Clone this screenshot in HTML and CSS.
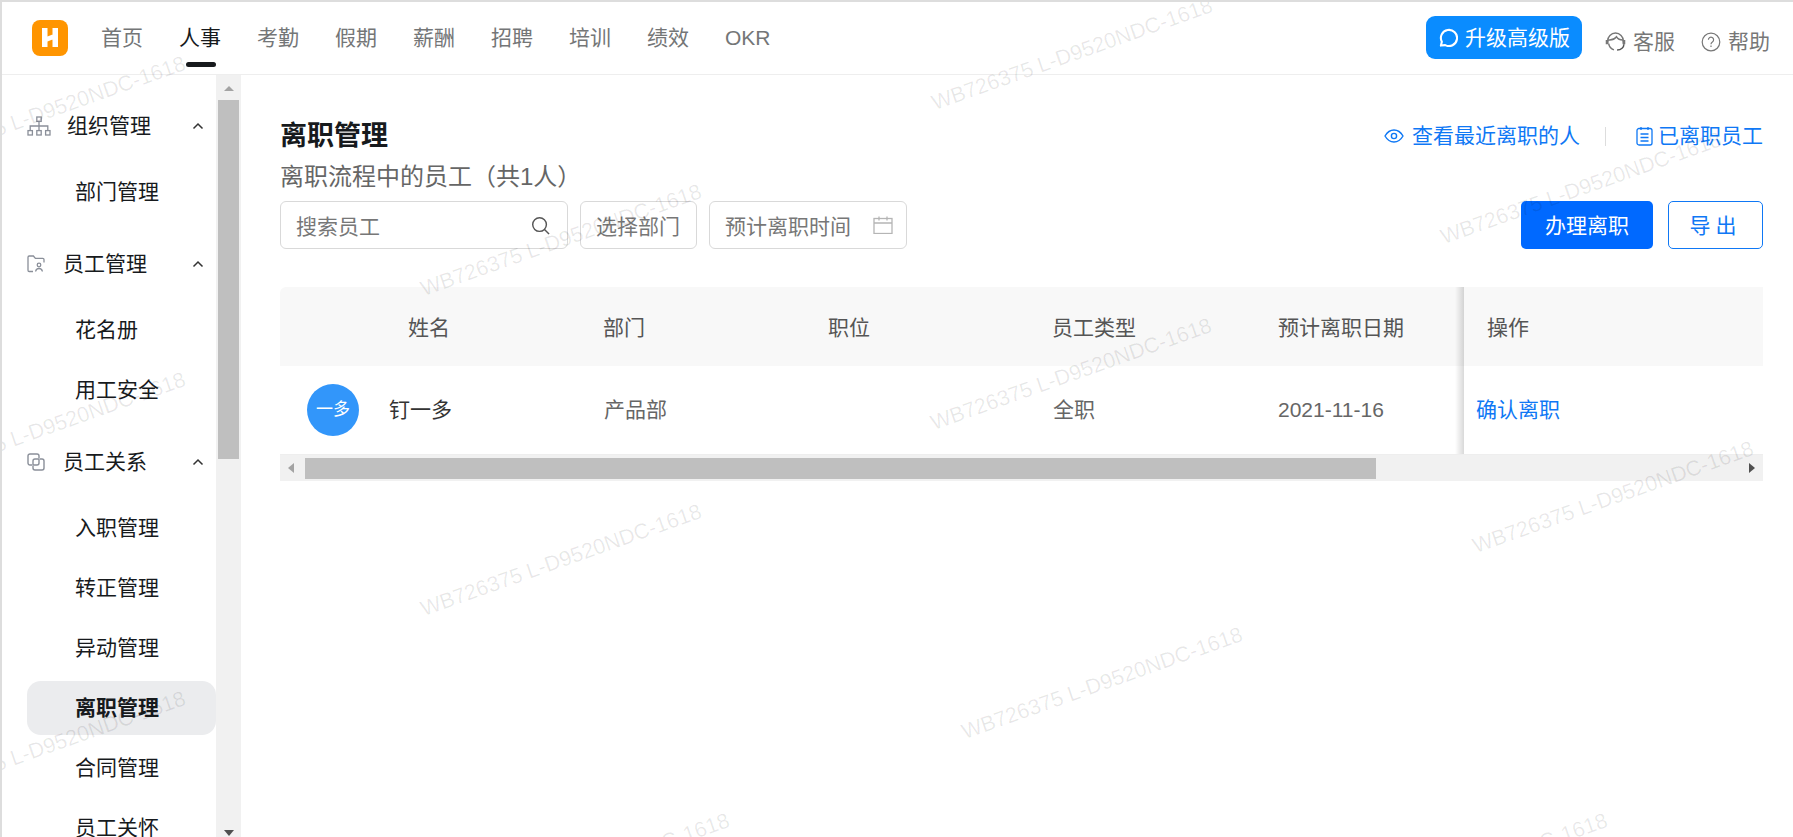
FILE: index.html

```html
<!DOCTYPE html>
<html lang="zh-CN">
<head>
  <meta charset="UTF-8">
  <title>离职管理</title>
  <link rel="stylesheet" href="styles.css">
</head>
<body>
<div class="app">
  <header class="topbar">
    <svg class="logo" viewBox="0 0 36 36">
      <rect width="36" height="36" rx="8" fill="#ff9500"/>
      <path d="M10 8h5.500v19H10z M20.500 8h5.500v19h-5.500z M15.500 16.500l5-2v5l-5 2z" fill="#fff"/>
    </svg>
    <nav class="nav">
      <a class="nav-item">首页</a>
      <a class="nav-item active">人事</a>
      <a class="nav-item">考勤</a>
      <a class="nav-item">假期</a>
      <a class="nav-item">薪酬</a>
      <a class="nav-item">招聘</a>
      <a class="nav-item">培训</a>
      <a class="nav-item">绩效</a>
      <a class="nav-item">OKR</a>
    </nav>
    <button class="upgrade">
      <svg viewBox="0 0 20 20" fill="none" stroke="#fff" stroke-width="2.200">
        <path d="M2 18.500l1-4A8.500 8.500 0 1 1 6.500 18z" stroke-linejoin="round"/>
      </svg>
      升级高级版
    </button>
    <a class="top-link service">
      <svg viewBox="0 0 20 20" fill="none" stroke="#777" stroke-width="1.400">
        <path d="M2.500 11V9.500a7.500 7.500 0 0 1 15 0V11"/>
        <path d="M3 8.500c3.500.5 6-.5 8-3 1.200 2 3 3 6 3"/>
        <path d="M3.500 12c.5 3 2.500 5 5 6"/>
        <path d="M2 8.500v4M18 8.500v4" stroke-width="2.600"/>
        <path d="M18 12.500c0 3-2.500 5.500-6.500 5.500" stroke="#555"/>
      </svg>
      客服
    </a>
    <a class="top-link help">
      <svg viewBox="0 0 20 20" fill="none" stroke="#777" stroke-width="1.200">
        <circle cx="10" cy="10" r="8.800"/>
        <path d="M7.400 7.800a2.600 2.600 0 1 1 4 2.200c-.9.600-1.400 1-1.400 2.200"/>
        <path d="M10 13.600v1.400"/>
      </svg>
      帮助
    </a>
  </header>

  <div class="content">
    <aside class="sidebar">
      <div class="menu">
        <div class="menu-group">
          <div class="group-title">
            <svg class="group-icon org" viewBox="0 0 24 20" fill="none" stroke="#8a8f99" stroke-width="1.300">
              <rect x="9.800" y="1" width="4.400" height="4.400"/>
              <rect x="1" y="14.600" width="4.400" height="4.400"/>
              <rect x="9.800" y="14.600" width="4.400" height="4.400"/>
              <rect x="18.600" y="14.600" width="4.400" height="4.400"/>
              <path d="M12 5.400v9.200M3.200 14.600V10h17.600v4.600"/>
            </svg>
            <span>组织管理</span>
            <svg class="chevron" viewBox="0 0 12 8" fill="none" stroke="#333" stroke-width="1.500"><path d="M1.500 6.500L6 2l4.500 4.500"/></svg>
          </div>
          <a class="menu-item">部门管理</a>
        </div>
        <div class="menu-group">
          <div class="group-title">
            <svg class="group-icon" viewBox="0 0 18 18" fill="none" stroke="#8a8f99" stroke-width="1.300">
              <path d="M6 16.500H2.200a1.200 1.200 0 0 1-1.200-1.200V2.200A1.200 1.200 0 0 1 2.200 1h4.200l2 2.400h7.400a1.200 1.200 0 0 1 1.200 1.200v3"/>
              <circle cx="12" cy="10" r="1.800"/>
              <path d="M8.600 16.500c.3-2 1.600-3 3.400-3s3.100 1 3.400 3"/>
            </svg>
            <span>员工管理</span>
            <svg class="chevron" viewBox="0 0 12 8" fill="none" stroke="#333" stroke-width="1.500"><path d="M1.500 6.500L6 2l4.500 4.500"/></svg>
          </div>
          <a class="menu-item">花名册</a>
          <a class="menu-item">用工安全</a>
        </div>
        <div class="menu-group">
          <div class="group-title">
            <svg class="group-icon" viewBox="0 0 18 18" fill="none" stroke="#8a8f99" stroke-width="1.400">
              <path d="M5 12H3a2 2 0 0 1-2-2V3a2 2 0 0 1 2-2h7a2 2 0 0 1 2 2v2"/>
              <path d="M13 6h2a2 2 0 0 1 2 2v7a2 2 0 0 1-2 2H8a2 2 0 0 1-2-2v-2"/>
              <path d="M6 12V8a2 2 0 0 1 2-2h4v4a2 2 0 0 1-2 2z"/>
            </svg>
            <span>员工关系</span>
            <svg class="chevron" viewBox="0 0 12 8" fill="none" stroke="#333" stroke-width="1.500"><path d="M1.500 6.500L6 2l4.500 4.500"/></svg>
          </div>
          <a class="menu-item">入职管理</a>
          <a class="menu-item">转正管理</a>
          <a class="menu-item">异动管理</a>
          <a class="menu-item active">离职管理</a>
          <a class="menu-item">合同管理</a>
          <a class="menu-item">员工关怀</a>
        </div>
      </div>
      <div class="vscroll">
        <i class="arrow-up"></i>
        <div class="vscroll-thumb"></div>
        <i class="arrow-down"></i>
      </div>
    </aside>

    <main class="main">
      <div class="page-head">
        <h1 class="page-title">离职管理</h1>
        <div class="page-links">
          <a class="page-link">
            <svg viewBox="0 0 20 14" fill="none" stroke="#0f78f5" stroke-width="1.400">
              <path d="M1 7c2.200-3.800 5.200-6 9-6s6.800 2.200 9 6c-2.200 3.800-5.200 6-9 6s-6.800-2.200-9-6z"/>
              <circle cx="10" cy="7" r="2.600"/>
            </svg>
            查看最近离职的人
          </a>
          <span class="link-sep"></span>
          <a class="page-link page-link-done">
            <svg viewBox="0 0 17 20" fill="none" stroke="#0f78f5" stroke-width="1.300">
              <rect x="1" y="2.500" width="15" height="16.500" rx="2"/>
              <path d="M5 1v3M12 1v3M4.500 8h8M4.500 11.500h8M4.500 15h8"/>
            </svg>
            已离职员工
          </a>
        </div>
      </div>
      <p class="page-sub">离职流程中的员工（共1人）</p>

      <div class="toolbar">
        <div class="filter filter-search">
          <input class="search-input" placeholder="搜索员工">
          <svg viewBox="0 0 20 20" fill="none" stroke="#555" stroke-width="1.500">
            <circle cx="9" cy="9" r="7.200"/>
            <path d="M14.200 14.200L19 19"/>
          </svg>
        </div>
        <div class="filter filter-dept">选择部门</div>
        <div class="filter filter-date">
          预计离职时间
          <svg viewBox="0 0 20 18" fill="none" stroke="#b5b5b5" stroke-width="1.300">
            <rect x="1" y="2.500" width="18" height="15"/>
            <path d="M1 7h18M6 .5v4M14 .5v4"/>
          </svg>
        </div>
        <div class="actions">
          <button class="btn btn-primary">办理离职</button>
          <button class="btn btn-outline">导出</button>
        </div>
      </div>

      <div class="table-wrap">
        <table class="table">
          <colgroup>
            <col class="col-name"><col class="col-dept"><col class="col-pos"><col class="col-type"><col class="col-date"><col class="col-op">
          </colgroup>
          <thead>
            <tr>
              <th class="th-name">姓名</th>
              <th>部门</th>
              <th>职位</th>
              <th>员工类型</th>
              <th>预计离职日期</th>
              <th class="fixed th-op">操作</th>
            </tr>
          </thead>
          <tbody>
            <tr>
              <td>
                <div class="person">
                  <span class="avatar">一多</span>
                  <span class="person-name">钉一多</span>
                </div>
              </td>
              <td>产品部</td>
              <td></td>
              <td>全职</td>
              <td class="td-date">2021-11-16</td>
              <td class="fixed td-op"><a class="confirm">确认离职</a></td>
            </tr>
          </tbody>
        </table>
        <div class="hscroll">
          <i class="arrow-left"></i>
          <div class="hscroll-thumb"></div>
          <i class="arrow-right"></i>
        </div>
      </div>
    </main>
  </div>

  <div class="watermarks">
    <span class="wm wm-1">WB726375 L-D9520NDC-1618</span>
    <span class="wm wm-2">WB726375 L-D9520NDC-1618</span>
    <span class="wm wm-3">WB726375 L-D9520NDC-1618</span>
    <span class="wm wm-4">WB726375 L-D9520NDC-1618</span>
    <span class="wm wm-5">WB726375 L-D9520NDC-1618</span>
    <span class="wm wm-6">WB726375 L-D9520NDC-1618</span>
    <span class="wm wm-7">WB726375 L-D9520NDC-1618</span>
    <span class="wm wm-8">WB726375 L-D9520NDC-1618</span>
    <span class="wm wm-9">WB726375 L-D9520NDC-1618</span>
    <span class="wm wm-10">WB726375 L-D9520NDC-1618</span>
    <span class="wm wm-11">WB726375 L-D9520NDC-1618</span>
    <span class="wm wm-12">WB726375 L-D9520NDC-1618</span>
  </div>
</div>
</body>
</html>
```

FILE: styles.css

```css
* { box-sizing: border-box; margin: 0; padding: 0; }
html, body { width: 100%; height: 100%; overflow: hidden; }
body {
  background: #fff; color: #171a1d;
  font-family: "Liberation Sans", "Noto Sans CJK SC", sans-serif;
  font-size: 21px; line-height: 30px;
}
svg { display: block; flex: none; }

.app {
  position: relative; width: 1793px; height: 837px; overflow: hidden;
  display: flex; flex-direction: column;
  border-top: 2px solid #ddd; border-left: 2px solid #ddd;
}

/* top bar */
.topbar {
  height: 73px; flex: none; display: flex; align-items: center;
  padding: 0 23px 1px 30px; border-bottom: 1px solid #eee;
}
.logo { width: 36px; height: 36px; margin-right: 33px; }
.nav { display: flex; gap: 36px; margin-right: auto; }
.nav-item { position: relative; color: #747677; }
.nav-item.active { color: #171a1d; }
.nav-item.active::after {
  content: ''; position: absolute; left: 7px; top: 39px;
  width: 30px; height: 5px; border-radius: 3px; background: #171a1d;
}
.upgrade {
  width: 156px; height: 43px; display: flex; align-items: center; gap: 7px;
  padding-left: 13px; border: none; border-radius: 9px;
  background: #0a8cff; color: #fff; font: inherit;
}
.upgrade svg { width: 19px; height: 19px; }
.top-link { display: flex; align-items: center; color: #777; margin-top: 8px; }
.top-link svg { width: 21px; height: 21px; }
.service { margin-left: 23px; gap: 7px; }
.help { margin-left: 26px; gap: 7px; }
.help svg { width: 20px; height: 20px; }

.content { flex: 1; display: flex; min-height: 0; }

/* sidebar */
.sidebar { width: 239px; flex: none; display: flex; }
.menu {
  flex: 1; min-width: 0; padding: 24px 0 0 25px; overflow: hidden;
  display: flex; flex-direction: column; gap: 18px;
}
.menu-group { display: flex; flex-direction: column; gap: 6px; flex: none; }
.group-title {
  height: 54px; display: flex; align-items: center; gap: 12px;
  padding-right: 12px; margin-bottom: 6px;
}
.group-title span { margin-right: auto; }
.group-icon { width: 18px; height: 18px; margin-right: 6px; }
.group-icon.org { width: 24px; height: 20px; margin-right: 4px; }
.chevron { width: 12px; height: 8px; }
.menu-item { height: 54px; display: flex; align-items: center; padding-left: 48px; border-radius: 14px; }
.menu-item.active { background: #ebecee; font-weight: 700; }

.vscroll {
  width: 25px; flex: none; background: #f1f1f1; padding-top: 11px;
  display: flex; flex-direction: column; align-items: center;
}
.vscroll-thumb { width: 21px; height: 359px; margin-top: 9px; background: #bfbfbf; }
.arrow-up { border: 5.5px solid transparent; border-top: 0; border-bottom: 5px solid #a3a3a3; }
.arrow-down { border: 5.5px solid transparent; border-bottom: 0; border-top: 6px solid #505050; margin: auto 0 1px; }

/* main */
.main { flex: 1; min-width: 0; padding: 43px 30px 0 39px; }
.page-head { display: flex; justify-content: space-between; align-items: center; height: 36px; }
.page-title { font-size: 27px; line-height: 36px; font-weight: 700; color: #171a1d; }
.page-links { display: flex; align-items: center; color: #0f78f5; }
.page-link { display: flex; align-items: center; gap: 8px; }
.page-link svg { width: 20px; height: 14px; }
.page-link-done { gap: 5px; }
.page-link-done svg { width: 17px; height: 20px; }
.link-sep { width: 1px; height: 19px; background: #ddd; margin: 0 30px 0 25px; }
.page-sub { font-size: 24px; line-height: 32px; margin-top: 7px; color: #666; }

.toolbar { display: flex; gap: 12px; margin-top: 8px; }
.filter {
  height: 48px; display: flex; align-items: center; justify-content: space-between;
  border: 1px solid #d9d9d9; border-radius: 6px; padding: 3px 13px 0 15px; color: #777;
}
.filter-search { width: 288px; padding-right: 17px; }
.filter-search svg { width: 19px; height: 19px; margin-top: -3px; }
.search-input {
  flex: 1; min-width: 0; border: none; outline: none; background: transparent;
  font: inherit; color: #333;
}
.search-input::placeholder { color: #777; opacity: 1; }
.filter-dept { width: 117px; }
.filter-date { width: 198px; }
.filter-date svg { width: 20px; height: 18px; margin-top: -3px; }
.actions { margin-left: auto; display: flex; gap: 15px; }
.btn { height: 48px; padding-top: 2px; border-radius: 5px; font: inherit; }
.btn-primary { width: 132px; border: none; background: #0069ff; color: #fff; }
.btn-outline { width: 95px; border: 1px solid #0f78f5; background: #fff; color: #0f78f5; letter-spacing: 5px; }

/* table */
.table-wrap { margin-top: 38px; }
.table { width: 1483px; table-layout: fixed; border-collapse: separate; border-spacing: 0; }
.col-name { width: 310px; }
.col-dept { width: 225px; }
.col-pos { width: 224px; }
.col-type { width: 226px; }
.col-date { width: 199px; }
.col-op { width: 299px; }
.table th {
  height: 79px; padding: 3px 0 0 13px; background: #f8f8f8;
  text-align: left; font-weight: 400; color: #555;
}
.table thead th:first-child { border-top-left-radius: 6px; }
.table td { height: 89px; padding-left: 14px; color: #666; border-bottom: 1px solid #eee; }
.table .th-name { padding-left: 128px; }
.table .td-date { padding-left: 13px; }
.table .fixed { position: relative; }
.table .fixed::before {
  content: ''; position: absolute; left: -9px; top: 0; bottom: 0; width: 9px;
  background: linear-gradient(to right, rgba(0,0,0,0), rgba(0,0,0,.15));
}
.table .th-op { padding-left: 23px; }
.table .td-op { padding-left: 12px; background: #fff; }
.confirm { color: #0f78f5; }
.person { display: flex; align-items: center; gap: 30px; margin-left: 13px; }
.avatar {
  width: 52px; height: 52px; border-radius: 50%; background: #3296fa;
  color: #fff; font-size: 17px; display: flex; align-items: center; justify-content: center;
}
.person-name { color: #333; }

.hscroll { height: 26px; background: #f1f1f1; display: flex; align-items: center; }
.hscroll-thumb { width: 1071px; height: 21px; background: #bfbfbf; margin-left: 11px; }
.arrow-left { border: 5.5px solid transparent; border-left: 0; border-right: 6px solid #a3a3a3; margin-left: 8px; }
.arrow-right { border: 5.5px solid transparent; border-right: 0; border-left: 6px solid #505050; margin: 0 8px 0 auto; }

/* lighter stretch of the window's top edge, watermark layer */
.app::before {
  content: ''; position: absolute; left: 239px; top: -2px;
  width: 222px; height: 2px; background: #f4f4f4;
}
.watermarks { position: absolute; inset: 0; overflow: hidden; pointer-events: none; }
.wm {
  position: absolute; font-size: 21.5px; line-height: 22px; white-space: nowrap;
  color: rgba(0,0,0,.09); transform-origin: 0 100%; transform: rotate(-19.5deg);
}
.wm-1 { left: 934px; top: 90px; }
.wm-2 { left: 423px; top: 276px; }
.wm-3 { left: 1443px; top: 224px; }
.wm-4 { left: 933px; top: 410px; }
.wm-5 { left: 1475px; top: 533px; }
.wm-6 { left: 423px; top: 596px; }
.wm-7 { left: 964px; top: 719px; }
.wm-8 { left: 451px; top: 905px; }
.wm-9 { left: 1329px; top: 905px; }
.wm-10 { left: -93px; top: 148px; }
.wm-11 { left: -93px; top: 464px; }
.wm-12 { left: -93px; top: 783px; }
```
